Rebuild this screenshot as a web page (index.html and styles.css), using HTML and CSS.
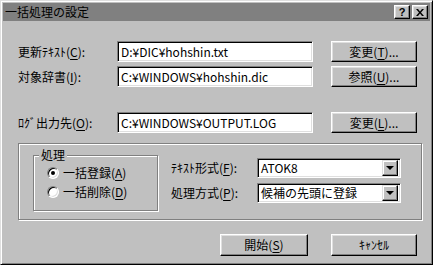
FILE: index.html
```html
<!DOCTYPE html>
<html lang="ja">
<head>
    <meta charset="UTF-8">
    <title>一括処理の設定</title>
    <link rel="stylesheet" href="styles.css">
</head>
<body>
    <div class="window">
        <div class="titlebar">
            <span class="title">一括処理の設定</span>
            <div class="title-buttons">
                <span class="tbtn help">?</span>
                <span class="tbtn">
                    <svg width="8" height="7" viewBox="0 0 8 7"><path d="M0 0h2l2 2.5L6 0h2L5 3.5 8 7H6L4 4.5 2 7H0l3-3.5z" fill="#000"/></svg>
                </span>
            </div>
        </div>

        <div class="content">
            <div class="row">
                <span class="label">更新ﾃｷｽﾄ(<u>C</u>):</span>
                <div class="textbox">D:¥DIC¥hohshin.txt</div>
                <div class="button">変更(<u>T</u>)...</div>
            </div>
            <div class="row">
                <span class="label">対象辞書(<u>I</u>):</span>
                <div class="textbox">C:¥WINDOWS¥hohshin.dic</div>
                <div class="button">参照(<u>U</u>)...</div>
            </div>
            <div class="row log">
                <span class="label">ﾛｸﾞ出力先(<u>O</u>):</span>
                <div class="textbox">C:¥WINDOWS¥OUTPUT.LOG</div>
                <div class="button">変更(<u>L</u>)...</div>
            </div>

            <div class="group outer">
                <div class="group mode">
                    <span class="legend">処理</span>
                    <div class="radio-row">
                        <span class="radio checked"></span>
                        <span>一括登録(<u>A</u>)</span>
                    </div>
                    <div class="radio-row">
                        <span class="radio"></span>
                        <span>一括削除(<u>D</u>)</span>
                    </div>
                </div>
                <div class="options">
                    <div class="option-row">
                        <span class="option-label">ﾃｷｽﾄ形式(<u>F</u>):</span>
                        <div class="combo">
                            <span class="combo-text">ATOK8</span>
                            <span class="combo-btn"><i class="arrow"></i></span>
                        </div>
                    </div>
                    <div class="option-row">
                        <span class="option-label">処理方式(<u>P</u>):</span>
                        <div class="combo">
                            <span class="combo-text">候補の先頭に登録</span>
                            <span class="combo-btn"><i class="arrow"></i></span>
                        </div>
                    </div>
                </div>
            </div>

            <div class="footer">
                <div class="button wide">開始(<u>S</u>)</div>
                <div class="button">ｷｬﾝｾﾙ</div>
            </div>
        </div>
    </div>
</body>
</html>
```

FILE: styles.css
```css
* {
    box-sizing: border-box;
}

html,
body {
    margin: 0;
    background: #c0c0c0;
}

body {
    width: 433px;
    height: 265px;
    overflow: hidden;
    font-family: "Noto Sans CJK JP", sans-serif;
    font-size: 12px;
    line-height: 14px;
    color: #000;
}

u {
    text-decoration-thickness: 1px;
    text-underline-offset: 2px;
}

.window {
    display: flex;
    flex-direction: column;
    width: 433px;
    height: 265px;
    padding: 2px;
    border: 1px solid;
    border-color: #dfdfdf #000 #000 #dfdfdf;
    box-shadow: inset 1px 1px #fff, inset -1px -1px #808080;
}

/* title bar */
.titlebar {
    display: flex;
    align-items: center;
    justify-content: space-between;
    height: 18px;
    padding: 0 2px;
    background: #808080;
}

.title {
    font-size: 12px;
}

.title-buttons {
    display: flex;
    gap: 2px;
}

.tbtn {
    display: flex;
    align-items: center;
    justify-content: center;
    width: 16px;
    height: 14px;
    background: #c0c0c0;
    border: 1px solid;
    border-color: #fff #000 #000 #fff;
    box-shadow: inset -1px -1px #808080, inset 1px 1px #dfdfdf;
}

.tbtn.help {
    font-family: "Liberation Sans", sans-serif;
    font-weight: bold;
    font-size: 11px;
    line-height: 11px;
}

/* body */
.content {
    padding: 20px 13px 0 15px;
}

.row {
    display: flex;
    align-items: center;
    height: 21px;
}

.row + .row {
    margin-top: 4px;
}

.row.log {
    margin-top: 25px;
}

.label {
    width: 99px;
}

.textbox {
    display: flex;
    align-items: center;
    width: 196px;
    height: 21px;
    padding-left: 3px;
    background: #fff;
    border: 1px solid;
    border-color: #808080 #fff #fff #808080;
    box-shadow: inset 1px 1px #000, inset -1px -1px #dfdfdf;
}

.button {
    display: flex;
    align-items: center;
    justify-content: center;
    width: 86px;
    height: 21px;
    margin-left: 18px;
    border: 1px solid;
    border-color: #fff #000 #000 #fff;
    box-shadow: inset -1px -1px #808080, inset 1px 1px #dfdfdf;
}

/* group boxes */
.group {
    border: 1px solid #808080;
    box-shadow: inset 1px 1px #fff, 1px 1px #fff;
}

.outer {
    display: flex;
    margin-top: 10px;
    width: 404px;
    padding: 11px 0 8px 14px;
}

.mode {
    position: relative;
    width: 125px;
    height: 56px;
    padding: 7px 0 0 13px;
}

.legend {
    position: absolute;
    top: -8px;
    left: 5px;
    padding: 0 2px;
    background: #c0c0c0;
}

.radio-row {
    display: flex;
    align-items: center;
    gap: 4px;
    height: 19px;
}

.radio {
    position: relative;
    width: 12px;
    height: 12px;
    border-radius: 50%;
    background: #fff;
    border: 1px solid;
    border-color: #808080 #fff #fff #808080;
    box-shadow: inset 1px 1px #000, inset -1px -1px #dfdfdf;
}

.radio.checked::after {
    content: "";
    position: absolute;
    top: 3px;
    left: 3px;
    width: 4px;
    height: 4px;
    border-radius: 50%;
    background: #000;
}

.options {
    margin-left: 13px;
    padding-top: 3px;
}

.option-row {
    display: flex;
    align-items: center;
    height: 20px;
}

.option-row + .option-row {
    margin-top: 5px;
}

.option-label {
    width: 86px;
}

.combo {
    display: flex;
    align-items: center;
    justify-content: space-between;
    width: 144px;
    height: 20px;
    padding: 2px 2px 2px 3px;
    background: #fff;
    border: 1px solid;
    border-color: #808080 #fff #fff #808080;
    box-shadow: inset 1px 1px #000, inset -1px -1px #dfdfdf;
}

.combo-btn {
    display: flex;
    align-items: center;
    justify-content: center;
    width: 16px;
    height: 16px;
    background: #c0c0c0;
    border: 1px solid;
    border-color: #dfdfdf #000 #000 #dfdfdf;
    box-shadow: inset -1px -1px #808080, inset 1px 1px #fff;
}

.arrow {
    width: 0;
    height: 0;
    border-left: 4px solid transparent;
    border-right: 4px solid transparent;
    border-top: 4px solid #000;
}

/* footer buttons */
.footer {
    display: flex;
    justify-content: flex-end;
    gap: 23px;
    margin-top: 14px;
}

.footer .button {
    height: 22px;
    margin-left: 0;
}

.footer .button.wide {
    width: 88px;
}
```
